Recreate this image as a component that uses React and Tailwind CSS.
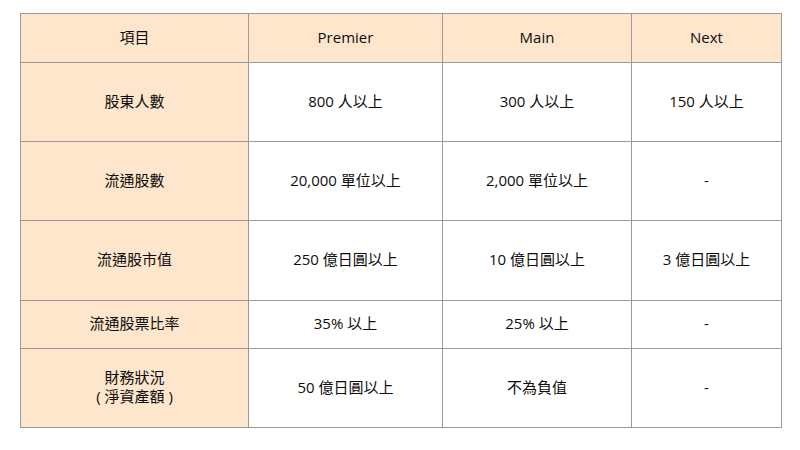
const headers = ['項目', 'Premier', 'Main', 'Next'];

const rows = [
    { label: ['股東人數'], values: ['800 人以上', '300 人以上', '150 人以上'], h: 'h-[79px]' },
    { label: ['流通股數'], values: ['20,000 單位以上', '2,000 單位以上', '-'], h: 'h-[79px]' },
    { label: ['流通股市值'], values: ['250 億日圓以上', '10 億日圓以上', '3 億日圓以上'], h: 'h-[80px]' },
    { label: ['流通股票比率'], values: ['35% 以上', '25% 以上', '-'], h: 'h-[48px]' },
    { label: ['財務狀況', '( 淨資產額 )'], values: ['50 億日圓以上', '不為負值', '-'], h: 'h-[79px]' },
];

const cell = 'border border-[#9a9a9a] pb-[2px] text-center align-middle';

export default function App() {
    return (
        <div className="h-[450px] w-[800px] bg-white pl-[20px] pt-[13px] font-['Open_Sans','Noto_Sans_CJK_TC',sans-serif] text-[15px] leading-[19px] text-[#0d0d0d]">
            <table className="border-collapse table-fixed">
                <colgroup>
                    <col className="w-[228px]" />
                    <col className="w-[194px]" />
                    <col className="w-[189px]" />
                    <col className="w-[150px]" />
                </colgroup>
                <thead>
                    <tr className="h-[49px] bg-[#fde6cb]">
                        {headers.map((h) => (
                            <th key={h} className={`${cell} font-normal`}>
                                {h}
                            </th>
                        ))}
                    </tr>
                </thead>
                <tbody>
                    {rows.map((row) => (
                        <tr key={row.label[0]} className={row.h}>
                            <td className={`${cell} bg-[#fde6cb]`}>
                                {row.label.map((l) => (
                                    <div key={l}>{l}</div>
                                ))}
                            </td>
                            {row.values.map((v, i) => (
                                <td key={i} className={`${cell} bg-white`}>
                                    {v}
                                </td>
                            ))}
                        </tr>
                    ))}
                </tbody>
            </table>
        </div>
    );
}
